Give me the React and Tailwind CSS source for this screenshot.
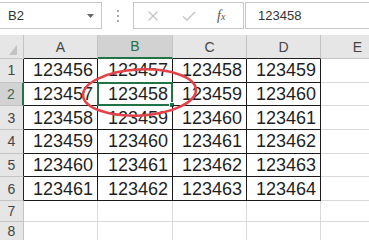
import React from 'react'

const cols = ['A', 'B', 'C', 'D', 'E']
const rows = [1, 2, 3, 4, 5, 6, 7, 8]

function Corner() {
  return (
    <div className="relative bg-[#e6e6e6] border-r border-b border-[#c4c4c4]">
      <svg className="absolute right-[6px] bottom-[3px]" width="8" height="10" viewBox="0 0 8 10">
        <path d="M8 0 L8 10 L0 10 Z" fill="#c2c2c2" />
      </svg>
    </div>
  )
}

function ColHeader({ label }) {
  const selected = label === 'B'
  const inTable = label !== 'E'
  return (
    <div
      className={`flex items-center justify-center text-[14px] leading-none border-r border-[#c4c4c4] ${
        selected
          ? 'bg-[#d2d2d2] text-[#217346] border-b-2 border-b-[#217346]'
          : inTable
          ? 'bg-[#e6e6e6] text-[#444] border-b border-b-[#222]'
          : 'bg-[#e6e6e6] text-[#444] border-b border-b-[#c4c4c4]'
      }`}
    >
      {label}
    </div>
  )
}

function RowHeader({ n }) {
  const selected = n === 2
  const inTable = n <= 6
  return (
    <div
      className={`flex items-center justify-center text-[14px] leading-none border-b border-[#c4c4c4] ${
        selected
          ? 'bg-[#d2d2d2] text-[#3d6b52] border-r-2 border-r-[#217346]'
          : inTable
          ? 'bg-[#e6e6e6] text-[#444] border-r border-r-[#222]'
          : 'bg-[#e6e6e6] text-[#444] border-r border-r-[#c4c4c4]'
      }`}
    >
      {n}
    </div>
  )
}

function Cell({ r, c }) {
  const inTable = r <= 6 && c < 4
  const value = inTable ? 123456 + r - 1 + c : ''
  const active = r === 2 && c === 1
  return (
    <div
      className={`relative flex items-center justify-end pr-[4px] text-[18px] leading-none text-[#1f1f1f] ${
        inTable ? 'border-r border-b border-[#1a1a1a]' : 'border-r border-b border-[#d9d9d9]'
      }`}
    >
      {value}
      {active && (
        <div className="absolute -left-[1px] -top-[1px] -right-[1px] -bottom-[1px] border-2 border-[#217346]">
          <div className="absolute -right-[4px] -bottom-[4px] w-[6px] h-[6px] bg-[#217346] border border-white" />
        </div>
      )}
    </div>
  )
}

export default function App() {
  return (
    <div className="w-[369px] h-[240px] overflow-hidden bg-white relative" style={{ fontFamily: '"Liberation Sans", Arial, sans-serif' }}>
      {/* formula bar */}
      <div className="h-[35px] flex items-start pt-[2px] bg-white">
        <div className="w-[102px] h-[27px] border border-l-0 border-[#c6c6c6] flex items-center justify-between pl-[8px] pr-[7px] text-[13px] text-[#333]">
          <span>B2</span>
          <svg width="7" height="4" viewBox="0 0 7 4">
            <path d="M0 0 L7 0 L3.5 4 Z" fill="#666" />
          </svg>
        </div>
        <div className="w-[31px] h-[27px] flex flex-col items-center justify-center gap-[3px]">
          <span className="w-[2px] h-[2px] bg-[#a8a8a8]" />
          <span className="w-[2px] h-[2px] bg-[#a8a8a8]" />
          <span className="w-[2px] h-[2px] bg-[#a8a8a8]" />
        </div>
        <div className="w-[111px] h-[27px] border border-[#c6c6c6] flex items-center">
          <svg className="ml-[13px]" width="12" height="12" viewBox="0 0 12 12">
            <path d="M1.5 1.5 L10.5 10.5 M10.5 1.5 L1.5 10.5" stroke="#c4c4c4" strokeWidth="1.4" />
          </svg>
          <svg className="ml-[23px]" width="14" height="12" viewBox="0 0 14 12">
            <path d="M1 6.5 L5 10 L13 2" stroke="#c4c4c4" strokeWidth="1.5" fill="none" />
          </svg>
          <span className="ml-[21px] text-[14px] italic text-[#555]" style={{ fontFamily: '"Liberation Serif", serif' }}>
            f<span className="text-[10px]">x</span>
          </span>
        </div>
        <div className="ml-[1px] flex-1 h-[27px] border border-r-0 border-[#c6c6c6] flex items-center pl-[12px] text-[13px] text-[#333]">
          123458
        </div>
      </div>

      {/* sheet */}
      <div className="grid grid-cols-[24px_74px_75px_74px_74px_74px] grid-rows-[24px_23.7px_23.7px_23.6px_23.7px_23.7px_23.6px_21px_20px]">
        <Corner />
        {cols.map((c) => (
          <ColHeader key={c} label={c} />
        ))}
        {rows.map((r) => (
          <React.Fragment key={r}>
            <RowHeader n={r} />
            {cols.map((c, j) => (
              <Cell key={c} r={r} c={j} />
            ))}
          </React.Fragment>
        ))}
      </div>

      {/* annotation */}
      <svg className="absolute left-0 top-0 pointer-events-none" width="369" height="240">
        <ellipse cx="139.5" cy="92.5" rx="56.5" ry="23" fill="none" stroke="#e3434a" strokeWidth="2.6" transform="rotate(-3 139.5 92.5)" />
      </svg>
    </div>
  )
}
